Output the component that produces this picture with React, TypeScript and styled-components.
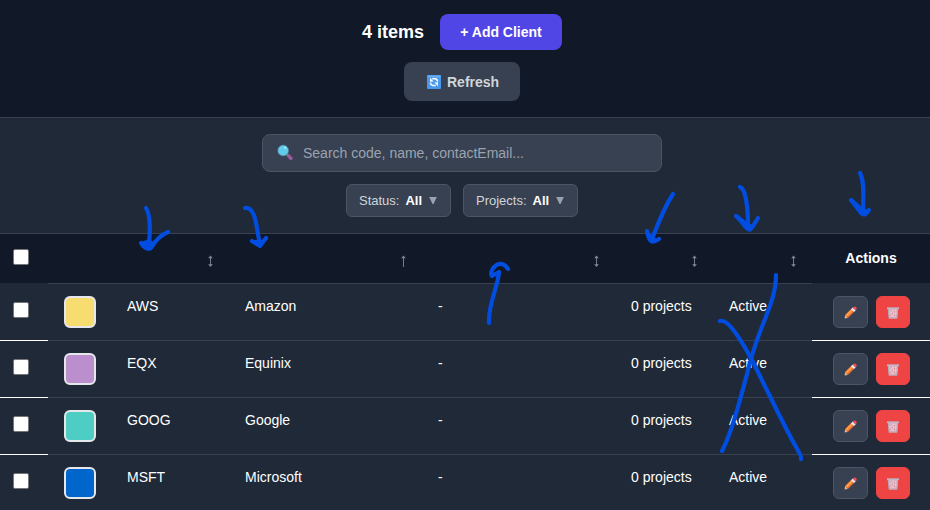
import React from "react";
import styled, { createGlobalStyle } from "styled-components";

const Global = createGlobalStyle`
  * { box-sizing: border-box; }
  body {
    margin: 0;
    background: #1f2937;
    color: #fff;
    font: 14px/20px "Liberation Sans", Arial, sans-serif;
    overflow: hidden;
  }
  svg { display: block; flex: none; }
`;

const Page = styled.div`
  position: relative;
  width: 930px;
  height: 510px;
  overflow: hidden;
`;

const Header = styled.header`
  height: 118px;
  padding: 14px 6px 0 0;
  background: #111827;
  border-bottom: 1px solid #374151;
  display: flex;
  flex-direction: column;
  align-items: center;
  gap: 12px;
`;

const HeaderRow = styled.div`
  display: flex;
  align-items: center;
  gap: 16px;
`;

const Count = styled.h2`
  margin: 0;
  width: 62px;
  font-size: 18px;
  white-space: nowrap;
`;

const AddButton = styled.button`
  width: 122px;
  height: 36px;
  padding: 0;
  border: 0;
  border-radius: 8px;
  background: #4f46e5;
  color: #fff;
  font: bold 14px "Liberation Sans", Arial, sans-serif;
`;

const RefreshButton = styled.button`
  display: flex;
  align-items: center;
  gap: 6px;
  width: 116px;
  height: 39px;
  padding: 1px 0 0 23px;
  border: 0;
  border-radius: 8px;
  background: #374151;
  color: #d1d5db;
  font: bold 14px "Liberation Sans", Arial, sans-serif;
`;

const Filters = styled.section`
  height: 116px;
  padding: 16px 6px 0 0;
  border-bottom: 1px solid #374151;
  display: flex;
  flex-direction: column;
  align-items: center;
  gap: 12px;
`;

const Search = styled.div`
  display: flex;
  align-items: center;
  gap: 9px;
  width: 400px;
  height: 38px;
  padding-left: 14px;
  border: 1px solid #4b5563;
  border-radius: 8px;
  background: #374151;
  color: #9ca3af;
`;

const Chips = styled.div`
  display: flex;
  gap: 12px;
`;

const Chip = styled.button<{ $width: number }>`
  display: flex;
  align-items: center;
  width: ${(p) => p.$width}px;
  height: 33px;
  padding: 0 0 0 12px;
  border: 1px solid #4b5563;
  border-radius: 6px;
  background: #374151;
  color: #d1d5db;
  font: 13px "Liberation Sans", Arial, sans-serif;
  b { color: #fff; margin: 0 7px 0 6px; }
`;

const columns = "48px 63px 118px 193px 193px 98px 99px 118px";

const HeadRow = styled.div`
  display: grid;
  grid-template-columns: ${columns};
  height: 50px;
  background: #111827;
`;

const Row = styled.div`
  display: grid;
  grid-template-columns: ${columns};
  height: 57px;
`;

const HeadCell = styled.div<{ $line?: boolean }>`
  display: flex;
  align-items: center;
  justify-content: flex-end;
  padding: 3px 16px 0 0;
  border-bottom: 1px solid ${(p) => (p.$line === false ? "#1f2937" : "#374151")};
`;

const ActionsHead = styled(HeadCell)`
  justify-content: center;
  padding: 0 0 1px;
  font-weight: bold;
`;

const HeadCheck = styled(HeadCell)`
  justify-content: flex-start;
  padding: 0 0 3px 13px;
`;

const Cell = styled.div`
  padding: 12px 0 0 16px;
  border-bottom: 1px solid #374151;
`;

const EdgeCell = styled.div`
  display: flex;
  gap: 8px;
  border-bottom: 1px solid #fff;
`;

const CheckCell = styled(EdgeCell)`
  padding: 18px 0 0 13px;
`;

const ActionCell = styled(EdgeCell)`
  padding: 12px 0 0 21px;
`;

const Checkbox = styled.span`
  width: 16px;
  height: 16px;
  border: 1px solid #767676;
  border-radius: 2px;
  background: #fff;
`;

const Swatch = styled.div<{ $color: string }>`
  width: 32px;
  height: 32px;
  border: 2px solid #e5e7eb;
  border-radius: 6px;
  background: ${(p) => p.$color};
`;

const EditButton = styled.button`
  display: grid;
  place-items: center;
  width: 35px;
  height: 32px;
  padding: 1px 0 0;
  border: 1px solid #4b5563;
  border-radius: 6px;
  background: #374151;
`;

const DeleteButton = styled(EditButton)`
  width: 34px;
  padding-top: 2px;
  border-color: #ef4444;
  background: #ef4444;
`;

const Ink = styled.svg`
  position: absolute;
  inset: 0;
  pointer-events: none;
`;

const RefreshIcon = () => (
  <svg width="14" height="14" viewBox="0 0 14 14">
    <rect width="14" height="14" rx="1" fill="#4a98ec" />
    <path d="M.5 .5h13v2H.5z" fill="#66aef4" />
    <path d="M5.2 3.7H8Q10.4 3.9 10.6 6.6M8.8 10.4H6Q3.7 10.1 3.4 7.6" fill="none" stroke="#f2f8ff" strokeWidth="1.5" />
    <path d="M3 2.8v4L6.6 6.6zM11 11.2v-4L7.4 7.5z" fill="#f2f8ff" />
  </svg>
);

const SearchIcon = () => (
  <svg width="17" height="19" viewBox="0 0 17 19">
    <path d="M9.7 10.3l1.8 1.5" stroke="#8b95a8" strokeWidth="2" />
    <path d="M11.7 12l2.2 2.4" stroke="#9a5b9a" strokeWidth="3.6" strokeLinecap="round" />
    <circle cx="6.2" cy="6.5" r="5.4" fill="#62cbea" stroke="#477f9b" strokeWidth=".7" />
    <circle cx="8.2" cy="3.8" r="1" fill="#b9effa" />
  </svg>
);

const Caret = () => (
  <svg width="8" height="9" viewBox="0 0 8 9">
    <path d="M.2 1h7.6L4.5 8h-1z" fill="#9ca3af" />
  </svg>
);

const SortIcon = ({ up = false }: { up?: boolean }) => (
  <svg width="5" height="12" viewBox="0 0 5 12">
    <path d={up ? "M2.5 1v11" : "M2.5 1v10"} stroke="#767c89" strokeWidth="1" />
    <path
      d={up ? "M2.5 .5l2.3 2.8H.2z" : "M2.5 .5l2.3 2.8H.2zM2.5 12l2.3-2.8H.2z"}
      fill="#828895"
    />
  </svg>
);

const SortCell = styled(HeadCell)`
  padding: 5px 16px 0 0;
`;

const PencilIcon = () => (
  <svg width="13" height="13" viewBox="0 0 13 13">
    <path d="M.5 12.5l.6-3.4 2.8 2.8z" fill="#e5b69a" />
    <path d="M1.1 9.1L7.3 2.8l2.9 2.9L3.9 11.9z" fill="#f06f35" />
    <path d="M1.4 9.2L7.6 3l1.5 1.5L2.9 10.7z" fill="#ffa044" />
    <path d="M7 3.2l1.7-1.6 3 2.9-1.6 1.6z" fill="#eee5ec" />
    <path d="M8.7 1.6Q10.3-.1 12 1q1.4 1.6-.3 3.5z" fill="#f44c56" />
    <path d="M.4 12.6l1-.3-.8-.7z" fill="#47404a" />
  </svg>
);

const TrashIcon = () => (
  <svg width="12" height="12" viewBox="0 0 12 12">
    <path d="M1 1.5h10L10 11.5H2z" fill="#dcb3bf" />
    <path d="M3 3l5.5 6.5M6 3l3.5 4M2.5 6l3.5 4M9 3L3.2 9.5M6 3L2.6 7M9.5 6L6 10" stroke="#eadde6" strokeWidth=".6" />
    <path d="M4 3.3v1M7.5 4.3v1M5.5 5.8v1M3.8 7.5v1M7.5 7.8v1" stroke="#d9667a" strokeWidth=".8" />
    <path d="M1.3 2l.9 9h7.6l.9-9" fill="none" stroke="#b7a9bb" strokeWidth="1.1" />
    <path d="M0 1.2h12" stroke="#c0b6c7" strokeWidth="1.7" />
  </svg>
);

const clients = [
  { code: "AWS", name: "Amazon", color: "#f7dc6f" },
  { code: "EQX", name: "Equinix", color: "#bb8fce" },
  { code: "GOOG", name: "Google", color: "#4ecdc4" },
  { code: "MSFT", name: "Microsoft", color: "#0066cc" },
];

const strokes = [
  "M146 208C151 216 150 231 149 246M141 243C143 247 147 250 151 248Q158 236 168 232",
  "M245 208C256 207 256 226 260 245M252 241L260 246L266 238",
  "M489 323C488 304 498 287 499 272L492 276C488 271 500 256 508 269",
  "M673 194C663 209 657 227 652 239M647 231C649 244 653 243 659 239",
  "M740 187C746 189 748 209 748 227M736 216C743 221 748 236 753 226L758 218",
  "M860 173C865 182 863 199 863 212M851 200L861 213Q865 217 869 210",
  "M776 275C776 302 761 322 751 359C742 392 733 430 722 451",
  "M720 321C729 318 745 347 754 364C770 396 784 426 796 447Q802 457 801 459",
];

const arrowHeads = [
  "M141 242L149 239L155 243L150 249L145 248z",
  "M252 240L259 240L265 240L260 246z",
  "M647 230L652 235L658 240L652 242L648 239z",
  "M737 214L747 222L754 226L750 232L743 227z",
  "M852 198L862 207L868 210L861 215L856 209z",
];

export default function App() {
  return (
    <Page>
      <Global />
      <Header>
        <HeaderRow>
          <Count>4 items</Count>
          <AddButton>+ Add Client</AddButton>
        </HeaderRow>
        <RefreshButton><RefreshIcon />Refresh</RefreshButton>
      </Header>
      <Filters>
        <Search><SearchIcon />Search code, name, contactEmail...</Search>
        <Chips>
          <Chip $width={105}>Status:<b>All</b><Caret /></Chip>
          <Chip $width={115}>Projects:<b>All</b><Caret /></Chip>
        </Chips>
      </Filters>
      <HeadRow>
        <HeadCheck $line={false}><Checkbox /></HeadCheck>
        <HeadCell />
        <SortCell><SortIcon /></SortCell>
        <SortCell><SortIcon up /></SortCell>
        <SortCell><SortIcon /></SortCell>
        <SortCell><SortIcon /></SortCell>
        <SortCell><SortIcon /></SortCell>
        <ActionsHead $line={false}>Actions</ActionsHead>
      </HeadRow>
      {clients.map((client) => (
        <Row key={client.code}>
          <CheckCell><Checkbox /></CheckCell>
          <Cell><Swatch $color={client.color} /></Cell>
          <Cell>{client.code}</Cell>
          <Cell>{client.name}</Cell>
          <Cell>-</Cell>
          <Cell>0 projects</Cell>
          <Cell>Active</Cell>
          <ActionCell>
            <EditButton aria-label="Edit"><PencilIcon /></EditButton>
            <DeleteButton aria-label="Delete"><TrashIcon /></DeleteButton>
          </ActionCell>
        </Row>
      ))}
      <Ink width="930" height="510" viewBox="0 0 930 510">
        {strokes.map((d) => (
          <path key={d} d={d} fill="none" stroke="#004de0" strokeWidth="4.2" strokeLinecap="round" strokeLinejoin="round" />
        ))}
        {arrowHeads.map((d) => (
          <path key={d} d={d} fill="#004de0" />
        ))}
      </Ink>
    </Page>
  );
}
